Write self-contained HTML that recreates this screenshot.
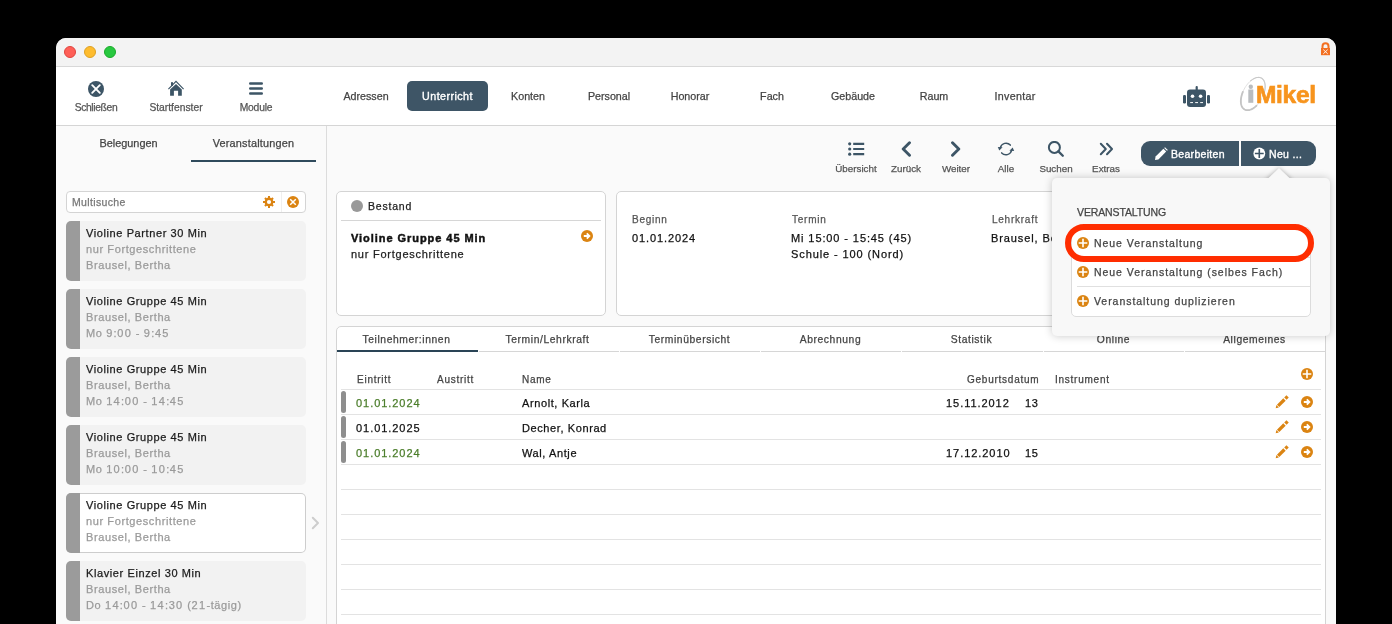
<!DOCTYPE html>
<html><head><meta charset="utf-8">
<style>
*{box-sizing:border-box;margin:0;padding:0}
html,body{width:1392px;height:624px;overflow:hidden;background:#000}
body{position:relative;font-family:"Liberation Sans",sans-serif;color:#222}
.a,.tbl,.nav,.tool,.tab,.card .t{will-change:transform;-webkit-text-stroke-width:0.25px}
.a{position:absolute;white-space:nowrap}
#win{position:absolute;left:56px;top:38px;width:1280px;height:600px;background:#fafafa;border-radius:10px 10px 0 0;overflow:hidden}
#title{position:absolute;left:56px;top:38px;width:1280px;height:29px;background:#f3f3f3;border-bottom:1px solid #d8d8d8;border-radius:10px 10px 0 0}
.tl{position:absolute;top:46px;width:12px;height:12px;border-radius:50%}
#tb{position:absolute;left:56px;top:67px;width:1280px;height:59px;background:#fff;border-bottom:1px solid #d5d5d5}
.tbl{position:absolute;top:102px;font-size:10.3px;color:#555;text-align:center;width:80px}
.nav{position:absolute;top:90px;font-size:10.7px;color:#444;text-align:center}
#side{position:absolute;left:56px;top:126px;width:271px;height:500px;background:#fafafa;border-right:1px solid #dcdcdc}
.card{position:absolute;left:66px;width:240px;height:60px;background:#f2f2f2;border-radius:5px;overflow:hidden}
.card .bar{position:absolute;left:0;top:0;bottom:0;width:14px;background:#9b9b9b}
.card .t{position:absolute;left:20px;font-size:11px;letter-spacing:0.6px;white-space:nowrap}
.card .dg{letter-spacing:1.35px}
.card .t1{top:6px;color:#1b1b1b}
.card .t2{top:22px;color:#9a9a9a}
.card .t3{top:38px;color:#9a9a9a}
.tool{position:absolute;top:163px;font-size:9.8px;color:#555;width:60px;text-align:center}
.info-l{font-size:10px;color:#555;letter-spacing:0.75px}
.info-v{font-size:11px;color:#111;letter-spacing:0.9px}
.tab{position:absolute;top:334px;width:141px;text-align:center;font-size:10.3px;color:#444;letter-spacing:0.6px}
.th{top:374px;font-size:10px;color:#444;letter-spacing:0.75px}
.td{font-size:11px;color:#111;letter-spacing:0.6px}
.tdn{letter-spacing:0.95px}
</style></head><body>
<div id="win"></div>
<div id="title"></div>
<div class="tl" style="left:64px;background:#fe5f57;border:0.5px solid #e0443e"></div>
<div class="tl" style="left:84px;background:#febc2e;border:0.5px solid #dea123"></div>
<div class="tl" style="left:104px;background:#28c840;border:0.5px solid #1aab29"></div>
<!-- lock -->
<svg class="a" style="left:1319px;top:41px" width="13" height="15" viewBox="0 0 13 15">
<path d="M3.5 7.2V5.3a3 3 0 0 1 6 0V7.2" fill="none" stroke="#f37021" stroke-width="2"/>
<rect x="2" y="7" width="9" height="7.2" fill="#f37021"/>
<path d="M4.3 8.6l4.4 4.2M8.7 8.6l-4.4 4.2" stroke="#fff" stroke-width="0.9"/>
</svg>

<div id="tb"></div>
<!-- left toolbar -->
<svg class="a" style="left:88px;top:80.5px" width="16" height="16" viewBox="0 0 16 16">
<circle cx="8" cy="8" r="8" fill="#3d5566"/>
<path d="M4.2 4.2l7.6 7.6M11.8 4.2l-7.6 7.6" stroke="#fff" stroke-width="1.9" stroke-linecap="round"/>
</svg>
<div class="tbl" style="left:56px;top:102px;font-size:10.3px;letter-spacing:-0.35px">Schließen</div>
<svg class="a" style="left:168px;top:80px" width="16" height="16" viewBox="0 0 16 16">
<path d="M0.4 9.2L8 1.4l7.6 7.8" fill="none" stroke="#3d5566" stroke-width="1.2"/>
<rect x="3" y="2.2" width="2" height="3.6" fill="#3d5566"/>
<path d="M2.1 9.4L8 4.1l5.8 5.3V15.8H10.1V10.8H5.9V15.8H2.1Z" fill="#3d5566"/>
</svg>
<div class="tbl" style="left:136px">Startfenster</div>
<svg class="a" style="left:249px;top:82px" width="14" height="13" viewBox="0 0 14 13">
<path d="M1.2 1.5h11.6M1.2 6.5h11.6M1.2 11.5h11.6" stroke="#3d5566" stroke-width="2.4" stroke-linecap="round"/>
</svg>
<div class="tbl" style="left:216px;letter-spacing:-0.2px">Module</div>

<!-- nav -->
<div class="nav" style="left:326px;width:80px">Adressen</div>
<div class="a" style="left:407px;top:81px;width:81px;height:30px;background:#3e5566;border-radius:5px"></div>
<div class="nav" style="left:407px;width:81px;color:#fff;letter-spacing:0.45px;-webkit-text-stroke:0.35px #fff">Unterricht</div>
<div class="nav" style="left:488px;width:80px">Konten</div>
<div class="nav" style="left:569px;width:80px">Personal</div>
<div class="nav" style="left:650px;width:80px">Honorar</div>
<div class="nav" style="left:732px;width:80px">Fach</div>
<div class="nav" style="left:813px;width:80px">Gebäude</div>
<div class="nav" style="left:894px;width:80px">Raum</div>
<div class="nav" style="left:975px;width:80px;letter-spacing:0.3px">Inventar</div>

<!-- robot -->
<svg class="a" style="left:1182px;top:85px" width="30" height="23" viewBox="0 0 30 23">
<rect x="13.6" y="1" width="2.2" height="5" rx="1" fill="#3d5566"/>
<rect x="5" y="4.5" width="19" height="17.5" rx="3" fill="#3d5566"/>
<rect x="1" y="10" width="3" height="8.5" rx="1.2" fill="#3d5566"/>
<rect x="25" y="10" width="3" height="8.5" rx="1.2" fill="#3d5566"/>
<circle cx="10.5" cy="11.2" r="1.8" fill="#fff"/>
<circle cx="18.6" cy="11.2" r="1.8" fill="#fff"/>
<path d="M8.2 17.6h2.8M13.2 17.6h2.8M18.2 17.6h2.8" stroke="#fff" stroke-width="1"/>
</svg>
<!-- logo -->
<svg class="a" style="left:1236px;top:74px" width="90" height="40" viewBox="0 0 90 40">
<path d="M25.83 24.49 L25.07 25.85 L24.24 27.15 L23.37 28.40 L22.44 29.59 L21.47 30.70 L20.47 31.72 L19.44 32.66 L18.39 33.50 L17.33 34.23 L16.27 34.86 L15.22 35.37 L14.18 35.76 L13.16 36.03 L12.17 36.17 L11.21 36.20 L10.30 36.09 L9.44 35.87 L8.64 35.52 L7.91 35.05 L7.24 34.46 L6.64 33.77 L6.13 32.96 L5.69 32.06 L5.35 31.06 L5.09 29.98 L4.92 28.82 L4.85 27.59 L4.86 26.31 L4.97 24.97 L5.18 23.59 L5.47 22.19 L5.84 20.76 L6.31 19.33 L6.85 17.91 L7.48 16.49 L8.17 15.11 L8.93 13.75 L9.76 12.45 L10.63 11.20 L11.56 10.01 L12.53 8.90 L13.53 7.88 L14.56 6.94 L15.61 6.10 L16.67 5.37 L17.73 4.74 L18.78 4.23 L19.82 3.84 L20.84 3.57 L21.83 3.43 L22.79 3.40 L23.70 3.51 L24.56 3.73 L25.36 4.08 L26.09 4.55 L26.76 5.14 L27.36 5.83 L27.87 6.64 L28.31 7.54 L28.65 8.54 L28.91 9.62 L29.08 10.78 L29.15 12.01 L29.14 13.29 L29.03 14.63 L28.82 16.01 L28.53 17.41 L28.16 18.84 L27.69 20.27 L27.15 21.69 L26.52 23.11 L25.83 24.49" fill="none" stroke="#dcdcdc" stroke-width="0.9"/>
<path d="M20.47 31.72 L19.44 32.66 L18.39 33.50 L17.33 34.23 L16.27 34.86 L15.22 35.37 L14.18 35.76 L13.16 36.03 L12.17 36.17 L11.21 36.20 L10.30 36.09 L9.44 35.87 L8.64 35.52 L7.91 35.05 L7.24 34.46 L6.64 33.77 L6.13 32.96 L5.69 32.06 L5.35 31.06 L5.09 29.98 L4.92 28.82 L4.85 27.59 L4.86 26.31 L4.97 24.97 L5.18 23.59 L5.47 22.19 L5.84 20.76 L6.31 19.33 L6.85 17.91" fill="none" stroke="#c4c4c4" stroke-width="1.8" stroke-linecap="round"/>
<path d="M14.56 6.94 L15.61 6.10 L16.67 5.37 L17.73 4.74 L18.78 4.23 L19.82 3.84 L20.84 3.57 L21.83 3.43 L22.79 3.40 L23.70 3.51 L24.56 3.73 L25.36 4.08 L26.09 4.55 L26.76 5.14 L27.36 5.83 L27.87 6.64 L28.31 7.54 L28.65 8.54 L28.91 9.62 L29.08 10.78 L29.15 12.01 L29.14 13.29 L29.03 14.63 L28.82 16.01 L28.53 17.41 L28.16 18.84 L27.69 20.27" fill="none" stroke="#c9c9c9" stroke-width="1.1" stroke-linecap="round"/>
<rect x="12.3" y="15.5" width="5" height="13.3" fill="#b9bcbf"/>
<circle cx="14.8" cy="12.7" r="2.2" fill="#b9bcbf"/>
</svg>
<div class="a" style="left:1255.5px;top:81px;font-size:24.5px;font-weight:bold;color:#f7941d;letter-spacing:-0.3px;-webkit-text-stroke:0.7px #f7941d;text-shadow:-1.2px 0 0 #fff,-1.2px -1px 0 #fff">Mikel</div>

<!-- sidebar -->
<div id="side"></div>
<div class="a" style="left:66px;top:137px;width:125px;text-align:center;font-size:10.9px;color:#444">Belegungen</div>
<div class="a" style="left:191px;top:137px;width:125px;text-align:center;font-size:10.9px;color:#444;letter-spacing:0.2px">Veranstaltungen</div>
<div class="a" style="left:191px;top:160px;width:125px;height:2px;background:#2f4a5c"></div>
<div class="a" style="left:66px;top:191px;width:240px;height:22px;background:#fff;border:1px solid #d4d4d4;border-radius:4px"></div>
<div class="a" style="left:72px;top:196px;font-size:10.5px;color:#777;letter-spacing:0.35px">Multisuche</div>

<div class="card" style="top:221px"><div class="bar"></div><div class="t t1">Violine Partner 30 Min</div><div class="t t2">nur Fortgeschrittene</div><div class="t t3">Brausel, Bertha</div></div>
<div class="card" style="top:289px"><div class="bar"></div><div class="t t1">Violine Gruppe 45 Min</div><div class="t t2">Brausel, Bertha</div><div class="t t3">Mo <span class="dg">9</span>:<span class="dg">00</span> - <span class="dg">9</span>:<span class="dg">45</span></div></div>
<div class="card" style="top:357px"><div class="bar"></div><div class="t t1">Violine Gruppe 45 Min</div><div class="t t2">Brausel, Bertha</div><div class="t t3">Mo <span class="dg">14</span>:<span class="dg">00</span> - <span class="dg">14</span>:<span class="dg">45</span></div></div>
<div class="card" style="top:425px"><div class="bar"></div><div class="t t1">Violine Gruppe 45 Min</div><div class="t t2">Brausel, Bertha</div><div class="t t3">Mo <span class="dg">10</span>:<span class="dg">00</span> - <span class="dg">10</span>:<span class="dg">45</span></div></div>
<div class="card" style="top:493px;background:#fff;box-shadow:inset 0 0 0 1px #cdcdcd"><div class="bar"></div><div class="t t1">Violine Gruppe 45 Min</div><div class="t t2">nur Fortgeschrittene</div><div class="t t3">Brausel, Bertha</div></div>
<div class="card" style="top:561px"><div class="bar"></div><div class="t t1">Klavier Einzel 30 Min</div><div class="t t2">Brausel, Bertha</div><div class="t t3">Do <span class="dg">14</span>:<span class="dg">00</span> - <span class="dg">14</span>:<span class="dg">30</span> (<span class="dg">21</span>-tägig)</div></div>


<svg class="a" style="left:311px;top:516px" width="9" height="14" viewBox="0 0 9 14">
<path d="M1.8 1.8L7 7l-5.2 5.2" fill="none" stroke="#cdcdcd" stroke-width="2" stroke-linecap="round" stroke-linejoin="round"/></svg>
<!-- gear & x -->
<div class="a" style="left:281px;top:192px;width:1px;height:20px;background:#efefef"></div>
<svg class="a" style="left:263px;top:196px" width="12" height="12" viewBox="0 0 12 12">
<g fill="#db8412"><circle cx="6" cy="6" r="4.4"/>
<rect x="5" y="0" width="2" height="12"/><rect x="5" y="0.3" width="2" height="11.4" transform="rotate(45 6 6)"/><rect x="5" y="0" width="2" height="12" transform="rotate(90 6 6)"/><rect x="5" y="0.3" width="2" height="11.4" transform="rotate(135 6 6)"/></g>
<circle cx="6" cy="6" r="2.1" fill="#fff"/></svg>
<svg class="a" style="left:287px;top:196px" width="12" height="12" viewBox="0 0 12 12">
<circle cx="6" cy="6" r="6" fill="#db8412"/><path d="M3.2 3.2l5.6 5.6M8.8 3.2l-5.6 5.6" stroke="#fff" stroke-width="1.5"/></svg>
<!-- action toolbar -->
<svg class="a" style="left:848px;top:142px" width="17" height="14" viewBox="0 0 17 14">
<circle cx="1.7" cy="1.8" r="1.6" fill="#3d5566"/><circle cx="1.7" cy="7" r="1.6" fill="#3d5566"/><circle cx="1.7" cy="12.2" r="1.6" fill="#3d5566"/>
<path d="M5.2 1.8h11M5.2 7h11M5.2 12.2h11" stroke="#3d5566" stroke-width="2.2"/>
</svg>
<div class="tool" style="left:826px">Übersicht</div>
<svg class="a" style="left:900px;top:141px" width="12" height="16" viewBox="0 0 12 16">
<path d="M9.5 1.8L3.2 8l6.3 6.2" fill="none" stroke="#3d5566" stroke-width="2.9" stroke-linecap="round" stroke-linejoin="round"/>
</svg>
<div class="tool" style="left:876px">Zurück</div>
<svg class="a" style="left:950px;top:141px" width="12" height="16" viewBox="0 0 12 16">
<path d="M2.5 1.8L8.8 8l-6.3 6.2" fill="none" stroke="#3d5566" stroke-width="2.9" stroke-linecap="round" stroke-linejoin="round"/>
</svg>
<div class="tool" style="left:926px">Weiter</div>
<svg class="a" style="left:994px;top:138px" width="24" height="22" viewBox="0 0 24 22">
<path d="M16.3 7.1A5.8 5.8 0 0 0 6.4 9.6" fill="none" stroke="#3d5566" stroke-width="1.5" stroke-linecap="round"/>
<path d="M7.7 14.9A5.8 5.8 0 0 0 17.6 12.4" fill="none" stroke="#3d5566" stroke-width="1.5" stroke-linecap="round"/>
<path d="M3.8 8.9L8.6 9.3 5.3 12.4z" fill="#3d5566"/>
<path d="M20.2 13.1L15.4 12.7 18.7 9.6z" fill="#3d5566"/>
</svg>
<div class="tool" style="left:976px">Alle</div>
<svg class="a" style="left:1047px;top:141px" width="18" height="17" viewBox="0 0 18 17">
<circle cx="7.4" cy="6.4" r="5.5" fill="none" stroke="#3d5566" stroke-width="2"/>
<path d="M11.4 10.4l4.4 4.4" stroke="#3d5566" stroke-width="2.3" stroke-linecap="round"/>
</svg>
<div class="tool" style="left:1026px">Suchen</div>
<svg class="a" style="left:1099px;top:142px" width="15" height="14" viewBox="0 0 15 14">
<path d="M1.8 1.8L6.8 7l-5 5.2M8 1.8L13 7l-5 5.2" fill="none" stroke="#3d5566" stroke-width="2" stroke-linecap="round" stroke-linejoin="round"/>
</svg>
<div class="tool" style="left:1076px">Extras</div>

<div class="a" style="left:1141px;top:141px;width:98px;height:25px;background:#3e5566;border-radius:9px 0 0 9px"></div>
<div class="a" style="left:1241px;top:141px;width:75px;height:25px;background:#3e5566;border-radius:0 9px 9px 0"></div>
<svg class="a" style="left:1154px;top:147px" width="14" height="14" viewBox="0 0 14 14">
<path d="M1 13l0.6-3.4L9.4 1.8l2.8 2.8L4.4 12.4z" fill="#fff"/>
<path d="M10.2 1l0.8-0.8 2.8 2.8-0.8 0.8z" fill="#fff"/>
</svg>
<div class="a" style="left:1171px;top:148px;font-size:10.5px;color:#fff;letter-spacing:0.3px;-webkit-text-stroke:0.35px #fff">Bearbeiten</div>
<svg class="a" style="left:1253px;top:147px" width="13" height="13" viewBox="0 0 13 13">
<circle cx="6.3" cy="6.5" r="5.9" fill="#fff"/>
<path d="M6.3 2.1v8.8M1.9 6.5h8.8" stroke="#3e5566" stroke-width="1.6"/>
</svg>
<div class="a" style="left:1269px;top:148px;font-size:10.5px;color:#fff;letter-spacing:0.35px;-webkit-text-stroke:0.35px #fff">Neu ...</div>

<!-- Bestand card -->
<div class="a" style="left:336px;top:191px;width:270px;height:125px;background:#fff;border:1px solid #d4d4d4;border-radius:5px"></div>
<div class="a" style="left:351px;top:200px;width:12px;height:12px;border-radius:50%;background:#999"></div>
<div class="a" style="left:368px;top:200px;font-size:10.5px;color:#222;letter-spacing:0.8px">Bestand</div>
<div class="a" style="left:341px;top:220px;width:260px;height:1px;background:#d6d6d6"></div>
<div class="a" style="left:351px;top:232px;font-size:11px;font-weight:bold;color:#111;letter-spacing:0.95px;-webkit-text-stroke-width:0.45px">Violine Gruppe 45 Min</div>
<div class="a" style="left:351px;top:248px;font-size:11px;color:#222;letter-spacing:0.75px">nur Fortgeschrittene</div>
<svg class="a" style="left:581px;top:230px" width="12" height="12" viewBox="0 0 12 12">
<circle cx="6" cy="6" r="6" fill="#db8412"/>
<path d="M2.8 6h5.2M5.8 3.4L8.4 6 5.8 8.6" fill="none" stroke="#fff" stroke-width="1.8"/>
</svg>

<!-- info card -->
<div class="a" style="left:616px;top:191px;width:500px;height:125px;background:#fff;border:1px solid #d4d4d4;border-radius:5px"></div>
<div class="a info-l" style="left:632px;top:214px">Beginn</div>
<div class="a info-v" style="left:632px;top:232px">01.01.2024</div>
<div class="a info-l" style="left:792px;top:214px">Termin</div>
<div class="a info-v" style="left:791px;top:232px">Mi 15:00 - 15:45 (45)</div>
<div class="a info-v" style="left:791px;top:248px">Schule - 100 (Nord)</div>
<div class="a info-l" style="left:992px;top:214px">Lehrkraft</div>
<div class="a info-v" style="left:991px;top:232px">Brausel, Bertha</div>

<!-- tabs panel -->
<div class="a" style="left:336px;top:326px;width:990px;height:320px;background:#fff;border:1px solid #d4d4d4;border-radius:5px"></div>
<div class="a" style="left:337px;top:350px;width:141px;height:2px;background:#2a4456"></div>
<div class="a" style="left:479px;top:351px;width:140px;height:1px;background:#d6d6d6"></div>
<div class="a" style="left:620px;top:351px;width:140px;height:1px;background:#d6d6d6"></div>
<div class="a" style="left:761px;top:351px;width:140px;height:1px;background:#d6d6d6"></div>
<div class="a" style="left:902px;top:351px;width:141px;height:1px;background:#d6d6d6"></div>
<div class="a" style="left:1044px;top:351px;width:140px;height:1px;background:#d6d6d6"></div>
<div class="a" style="left:1185px;top:351px;width:140px;height:1px;background:#d6d6d6"></div>

<div class="tab" style="left:336px">Teilnehmer:innen</div>
<div class="tab" style="left:477px">Termin/Lehrkraft</div>
<div class="tab" style="left:619px">Terminübersicht</div>
<div class="tab" style="left:760px">Abrechnung</div>
<div class="tab" style="left:901px">Statistik</div>
<div class="tab" style="left:1043px">Online</div>
<div class="tab" style="left:1184px">Allgemeines</div>

<div class="a th" style="left:357px">Eintritt</div>
<div class="a th" style="left:437px">Austritt</div>
<div class="a th" style="left:522px">Name</div>
<div class="a th" style="left:967px">Geburtsdatum</div>
<div class="a th" style="left:1055px">Instrument</div>
<svg class="a" style="left:1301px;top:368px" width="12" height="12" viewBox="0 0 12 12">
<circle cx="6" cy="6" r="6" fill="#db8412"/>
<path d="M6 1.7v8.6M1.7 6h8.6" stroke="#fff" stroke-width="1.6"/>
</svg>
<div class="a" style="left:341px;top:389px;width:980px;height:1px;background:#e3e3e3"></div>
<div class="a" style="left:341px;top:414px;width:980px;height:1px;background:#e3e3e3"></div>
<div class="a" style="left:341px;top:439px;width:980px;height:1px;background:#e3e3e3"></div>
<div class="a" style="left:341px;top:464px;width:980px;height:1px;background:#e3e3e3"></div>
<div class="a" style="left:341px;top:489px;width:980px;height:1px;background:#e3e3e3"></div>
<div class="a" style="left:341px;top:514px;width:980px;height:1px;background:#e3e3e3"></div>
<div class="a" style="left:341px;top:539px;width:980px;height:1px;background:#e3e3e3"></div>
<div class="a" style="left:341px;top:564px;width:980px;height:1px;background:#e3e3e3"></div>
<div class="a" style="left:341px;top:589px;width:980px;height:1px;background:#e3e3e3"></div>
<div class="a" style="left:341px;top:614px;width:980px;height:1px;background:#e3e3e3"></div>
<div class="a" style="left:341px;top:391px;width:5px;height:22px;border-radius:2.5px;background:#8e8e8e"></div>
<div class="a td tdn" style="left:356px;top:397px;color:#4b7d2a">01.01.2024</div>
<div class="a td" style="left:522px;top:397px">Arnolt, Karla</div>
<div class="a td tdn" style="left:946px;top:397px">15.11.2012</div>
<div class="a td" style="left:1025px;top:397px">13</div>
<svg class="a" style="left:1275px;top:395px" width="14" height="14" viewBox="0 0 14 14">
<path d="M3.1 10.9L9.5 4.5" stroke="#db8412" stroke-width="3.3"/><path d="M10.4 3.6L12.6 1.4" stroke="#db8412" stroke-width="3.3"/><path d="M0.7 13.3L1.4 10.1 3.9 12.6z" fill="#db8412"/></svg>
<svg class="a" style="left:1301px;top:396px" width="12" height="12" viewBox="0 0 12 12">
<circle cx="6" cy="6" r="6" fill="#db8412"/>
<path d="M2.8 6h5.2M5.8 3.4L8.4 6 5.8 8.6" fill="none" stroke="#fff" stroke-width="1.8"/>
</svg>
<div class="a" style="left:341px;top:416px;width:5px;height:22px;border-radius:2.5px;background:#8e8e8e"></div>
<div class="a td tdn" style="left:356px;top:422px;color:#111">01.01.2025</div>
<div class="a td" style="left:522px;top:422px">Decher, Konrad</div>
<svg class="a" style="left:1275px;top:420px" width="14" height="14" viewBox="0 0 14 14">
<path d="M3.1 10.9L9.5 4.5" stroke="#db8412" stroke-width="3.3"/><path d="M10.4 3.6L12.6 1.4" stroke="#db8412" stroke-width="3.3"/><path d="M0.7 13.3L1.4 10.1 3.9 12.6z" fill="#db8412"/></svg>
<svg class="a" style="left:1301px;top:421px" width="12" height="12" viewBox="0 0 12 12">
<circle cx="6" cy="6" r="6" fill="#db8412"/>
<path d="M2.8 6h5.2M5.8 3.4L8.4 6 5.8 8.6" fill="none" stroke="#fff" stroke-width="1.8"/>
</svg>
<div class="a" style="left:341px;top:441px;width:5px;height:22px;border-radius:2.5px;background:#8e8e8e"></div>
<div class="a td tdn" style="left:356px;top:447px;color:#4b7d2a">01.01.2024</div>
<div class="a td" style="left:522px;top:447px">Wal, Antje</div>
<div class="a td tdn" style="left:946px;top:447px">17.12.2010</div>
<div class="a td" style="left:1025px;top:447px">15</div>
<svg class="a" style="left:1275px;top:445px" width="14" height="14" viewBox="0 0 14 14">
<path d="M3.1 10.9L9.5 4.5" stroke="#db8412" stroke-width="3.3"/><path d="M10.4 3.6L12.6 1.4" stroke="#db8412" stroke-width="3.3"/><path d="M0.7 13.3L1.4 10.1 3.9 12.6z" fill="#db8412"/></svg>
<svg class="a" style="left:1301px;top:446px" width="12" height="12" viewBox="0 0 12 12">
<circle cx="6" cy="6" r="6" fill="#db8412"/>
<path d="M2.8 6h5.2M5.8 3.4L8.4 6 5.8 8.6" fill="none" stroke="#fff" stroke-width="1.8"/>
</svg>


<!-- dropdown -->
<div class="a" style="left:1052px;top:178px;width:278px;height:158px;background:#f8f8f8;border-radius:5px;box-shadow:0 0 9px rgba(0,0,0,0.22)"></div>
<svg class="a" style="left:1259px;top:160px" width="40" height="18" viewBox="0 0 40 18">
<defs><filter id="sh" x="-50%" y="-50%" width="200%" height="200%"><feGaussianBlur stdDeviation="2.2"/></filter></defs>
<path d="M5.3 22L20 8 34.7 22z" fill="rgba(0,0,0,0.3)" filter="url(#sh)"/>
<path d="M5.3 22L20 8 34.7 22z" fill="#f8f8f8"/>
</svg>
<div class="a" style="left:1077px;top:206px;font-size:10.5px;color:#444;letter-spacing:-0.12px">VERANSTALTUNG</div>
<div class="a" style="left:1071px;top:227px;width:240px;height:90px;background:#fff;border:1px solid #dcdcdc;border-radius:5px"></div>
<div class="a" style="left:1077px;top:286px;width:233px;height:1px;background:#e0e0e0"></div>
<div class="a" style="left:1077px;top:257px;width:233px;height:1px;background:#e0e0e0"></div>
<svg class="a" style="left:1077px;top:237px" width="12" height="12" viewBox="0 0 12 12">
<circle cx="6" cy="6" r="6" fill="#db8412"/><path d="M6 1.7v8.6M1.7 6h8.6" stroke="#fff" stroke-width="1.6"/></svg>
<div class="a" style="left:1094px;top:237px;font-size:10.5px;color:#444;letter-spacing:0.95px">Neue Veranstaltung</div>
<svg class="a" style="left:1077px;top:266px" width="12" height="12" viewBox="0 0 12 12">
<circle cx="6" cy="6" r="6" fill="#db8412"/><path d="M6 1.7v8.6M1.7 6h8.6" stroke="#fff" stroke-width="1.6"/></svg>
<div class="a" style="left:1094px;top:266px;font-size:10.5px;color:#444;letter-spacing:0.95px">Neue Veranstaltung (selbes Fach)</div>
<svg class="a" style="left:1077px;top:295px" width="12" height="12" viewBox="0 0 12 12">
<circle cx="6" cy="6" r="6" fill="#db8412"/><path d="M6 1.7v8.6M1.7 6h8.6" stroke="#fff" stroke-width="1.6"/></svg>
<div class="a" style="left:1094px;top:295px;font-size:10.5px;color:#444;letter-spacing:0.95px">Veranstaltung duplizieren</div>

<div class="a" style="left:1065px;top:224px;width:249px;height:37.5px;border:6px solid #ff2d00;border-radius:19px"></div>
</body></html>
